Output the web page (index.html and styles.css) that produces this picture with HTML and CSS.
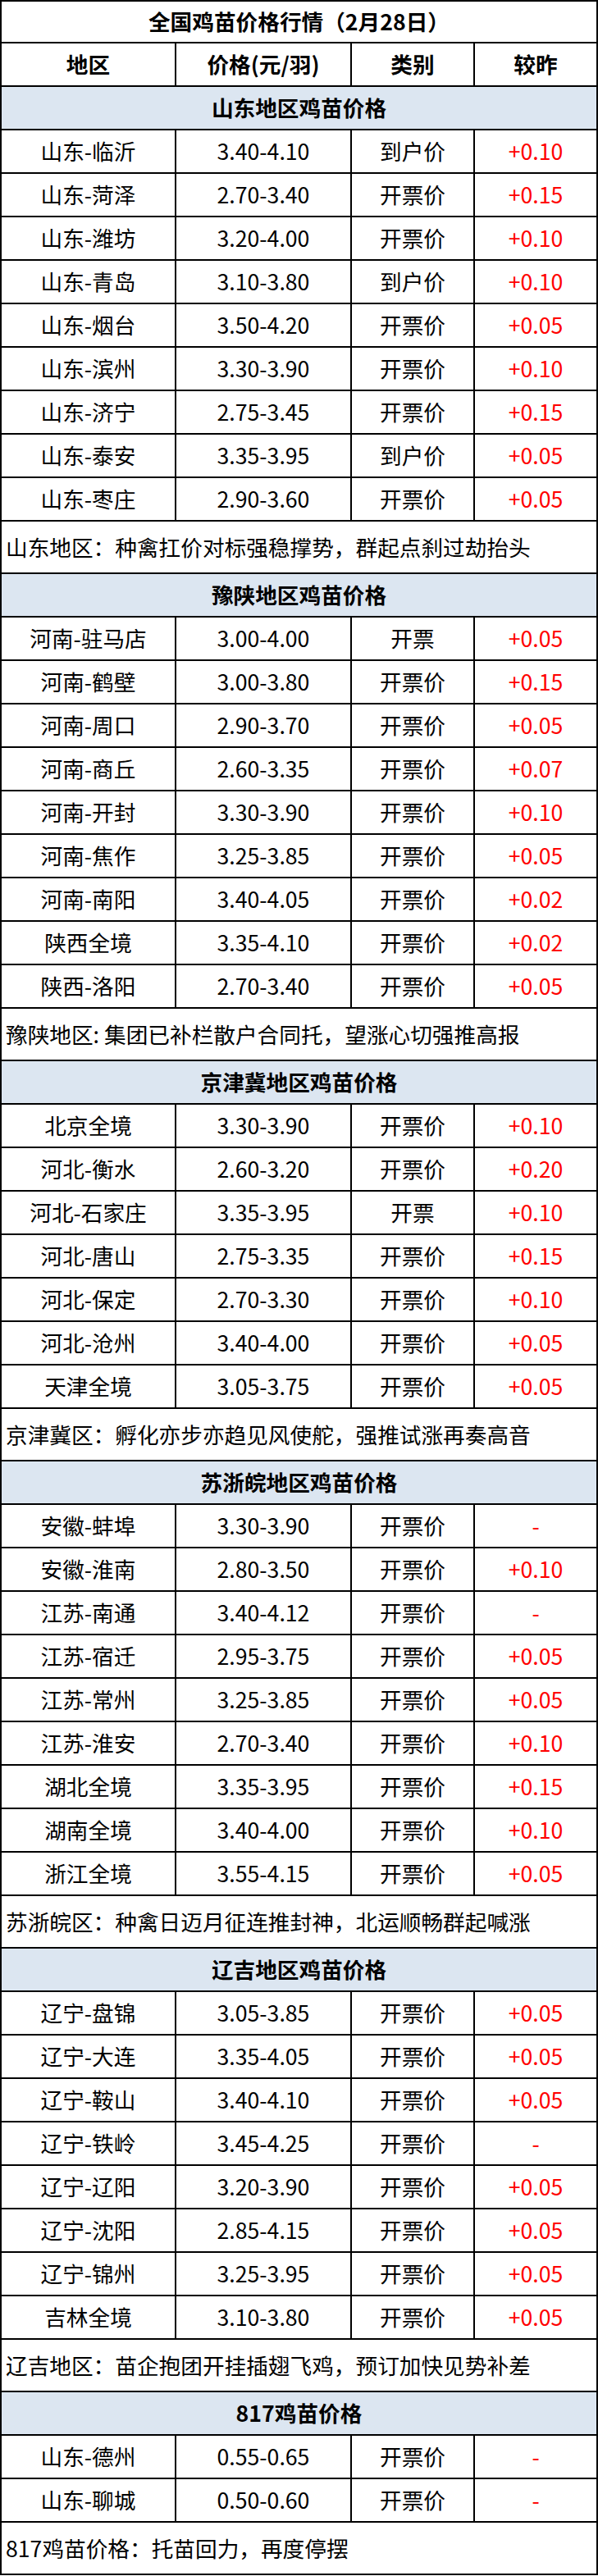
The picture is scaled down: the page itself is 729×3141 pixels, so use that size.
FILE: index.html
```html
<!DOCTYPE html>
<html lang="zh-CN">
<head>
<meta charset="utf-8">
<title>全国鸡苗价格行情</title>
<link rel="stylesheet" href="styles.css">
</head>
<body>
<div class="sheet">
  <div class="row full title"><div>全国鸡苗价格行情（2月28日）</div></div>
  <div class="row head"><div>地区</div><div>价格(元/羽)</div><div>类别</div><div>较昨</div></div>

  <div class="row full section"><div>山东地区鸡苗价格</div></div>
  <div class="row"><div>山东-临沂</div><div>3.40-4.10</div><div>到户价</div><div class="chg">+0.10</div></div>
  <div class="row"><div>山东-菏泽</div><div>2.70-3.40</div><div>开票价</div><div class="chg">+0.15</div></div>
  <div class="row"><div>山东-潍坊</div><div>3.20-4.00</div><div>开票价</div><div class="chg">+0.10</div></div>
  <div class="row"><div>山东-青岛</div><div>3.10-3.80</div><div>到户价</div><div class="chg">+0.10</div></div>
  <div class="row"><div>山东-烟台</div><div>3.50-4.20</div><div>开票价</div><div class="chg">+0.05</div></div>
  <div class="row"><div>山东-滨州</div><div>3.30-3.90</div><div>开票价</div><div class="chg">+0.10</div></div>
  <div class="row"><div>山东-济宁</div><div>2.75-3.45</div><div>开票价</div><div class="chg">+0.15</div></div>
  <div class="row"><div>山东-泰安</div><div>3.35-3.95</div><div>到户价</div><div class="chg">+0.05</div></div>
  <div class="row"><div>山东-枣庄</div><div>2.90-3.60</div><div>开票价</div><div class="chg">+0.05</div></div>
  <div class="row full note"><div>山东地区：种禽扛价对标强稳撑势，群起点刹过劫抬头</div></div>

  <div class="row full section"><div>豫陕地区鸡苗价格</div></div>
  <div class="row"><div>河南-驻马店</div><div>3.00-4.00</div><div>开票</div><div class="chg">+0.05</div></div>
  <div class="row"><div>河南-鹤壁</div><div>3.00-3.80</div><div>开票价</div><div class="chg">+0.15</div></div>
  <div class="row"><div>河南-周口</div><div>2.90-3.70</div><div>开票价</div><div class="chg">+0.05</div></div>
  <div class="row"><div>河南-商丘</div><div>2.60-3.35</div><div>开票价</div><div class="chg">+0.07</div></div>
  <div class="row"><div>河南-开封</div><div>3.30-3.90</div><div>开票价</div><div class="chg">+0.10</div></div>
  <div class="row"><div>河南-焦作</div><div>3.25-3.85</div><div>开票价</div><div class="chg">+0.05</div></div>
  <div class="row"><div>河南-南阳</div><div>3.40-4.05</div><div>开票价</div><div class="chg">+0.02</div></div>
  <div class="row"><div>陕西全境</div><div>3.35-4.10</div><div>开票价</div><div class="chg">+0.02</div></div>
  <div class="row"><div>陕西-洛阳</div><div>2.70-3.40</div><div>开票价</div><div class="chg">+0.05</div></div>
  <div class="row full note"><div>豫陕地区: 集团已补栏散户合同托，望涨心切强推高报</div></div>

  <div class="row full section"><div>京津冀地区鸡苗价格</div></div>
  <div class="row"><div>北京全境</div><div>3.30-3.90</div><div>开票价</div><div class="chg">+0.10</div></div>
  <div class="row"><div>河北-衡水</div><div>2.60-3.20</div><div>开票价</div><div class="chg">+0.20</div></div>
  <div class="row"><div>河北-石家庄</div><div>3.35-3.95</div><div>开票</div><div class="chg">+0.10</div></div>
  <div class="row"><div>河北-唐山</div><div>2.75-3.35</div><div>开票价</div><div class="chg">+0.15</div></div>
  <div class="row"><div>河北-保定</div><div>2.70-3.30</div><div>开票价</div><div class="chg">+0.10</div></div>
  <div class="row"><div>河北-沧州</div><div>3.40-4.00</div><div>开票价</div><div class="chg">+0.05</div></div>
  <div class="row"><div>天津全境</div><div>3.05-3.75</div><div>开票价</div><div class="chg">+0.05</div></div>
  <div class="row full note"><div>京津冀区：孵化亦步亦趋见风使舵，强推试涨再奏高音</div></div>

  <div class="row full section"><div>苏浙皖地区鸡苗价格</div></div>
  <div class="row"><div>安徽-蚌埠</div><div>3.30-3.90</div><div>开票价</div><div class="chg">-</div></div>
  <div class="row"><div>安徽-淮南</div><div>2.80-3.50</div><div>开票价</div><div class="chg">+0.10</div></div>
  <div class="row"><div>江苏-南通</div><div>3.40-4.12</div><div>开票价</div><div class="chg">-</div></div>
  <div class="row"><div>江苏-宿迁</div><div>2.95-3.75</div><div>开票价</div><div class="chg">+0.05</div></div>
  <div class="row"><div>江苏-常州</div><div>3.25-3.85</div><div>开票价</div><div class="chg">+0.05</div></div>
  <div class="row"><div>江苏-淮安</div><div>2.70-3.40</div><div>开票价</div><div class="chg">+0.10</div></div>
  <div class="row"><div>湖北全境</div><div>3.35-3.95</div><div>开票价</div><div class="chg">+0.15</div></div>
  <div class="row"><div>湖南全境</div><div>3.40-4.00</div><div>开票价</div><div class="chg">+0.10</div></div>
  <div class="row"><div>浙江全境</div><div>3.55-4.15</div><div>开票价</div><div class="chg">+0.05</div></div>
  <div class="row full note"><div>苏浙皖区：种禽日迈月征连推封神，北运顺畅群起喊涨</div></div>

  <div class="row full section"><div>辽吉地区鸡苗价格</div></div>
  <div class="row"><div>辽宁-盘锦</div><div>3.05-3.85</div><div>开票价</div><div class="chg">+0.05</div></div>
  <div class="row"><div>辽宁-大连</div><div>3.35-4.05</div><div>开票价</div><div class="chg">+0.05</div></div>
  <div class="row"><div>辽宁-鞍山</div><div>3.40-4.10</div><div>开票价</div><div class="chg">+0.05</div></div>
  <div class="row"><div>辽宁-铁岭</div><div>3.45-4.25</div><div>开票价</div><div class="chg">-</div></div>
  <div class="row"><div>辽宁-辽阳</div><div>3.20-3.90</div><div>开票价</div><div class="chg">+0.05</div></div>
  <div class="row"><div>辽宁-沈阳</div><div>2.85-4.15</div><div>开票价</div><div class="chg">+0.05</div></div>
  <div class="row"><div>辽宁-锦州</div><div>3.25-3.95</div><div>开票价</div><div class="chg">+0.05</div></div>
  <div class="row"><div>吉林全境</div><div>3.10-3.80</div><div>开票价</div><div class="chg">+0.05</div></div>
  <div class="row full note"><div>辽吉地区：苗企抱团开挂插翅飞鸡，预订加快见势补差</div></div>

  <div class="row full section"><div>817鸡苗价格</div></div>
  <div class="row"><div>山东-德州</div><div>0.55-0.65</div><div>开票价</div><div class="chg">-</div></div>
  <div class="row"><div>山东-聊城</div><div>0.50-0.60</div><div>开票价</div><div class="chg">-</div></div>
  <div class="row full note"><div>817鸡苗价格：托苗回力，再度停摆</div></div>
</div>
</body>
</html>
```

FILE: styles.css
```css
html, body {
  margin: 0;
  padding: 0;
  background: #ffffff;
}

body {
  font-family: "Noto Sans CJK SC", "Noto Sans", sans-serif;
  color: #000000;
  font-size: 20pt;
}

.sheet {
  width: 729px;
  box-sizing: border-box;
  border-top: 2px solid #000;
  border-left: 2px solid #000;
}

.row {
  display: grid;
  grid-template-columns: 213px 214px 150px 150px;
  height: 53px;
}

.row > div {
  box-sizing: border-box;
  border-right: 2px solid #000;
  border-bottom: 2px solid #000;
  display: flex;
  align-items: center;
  justify-content: center;
  line-height: 1;
  white-space: nowrap;
  overflow: hidden;
}

.row.full {
  grid-template-columns: 727px;
}

.row.title {
  height: 51px;
}

.title > div,
.head > div,
.section > div {
  font-weight: 700;
}

.section > div {
  background: #dce6f1;
}

.row.note {
  height: 64px;
}

.note > div {
  justify-content: flex-start;
  padding-left: 5px;
}

.chg {
  color: #ff0000;
}
```
